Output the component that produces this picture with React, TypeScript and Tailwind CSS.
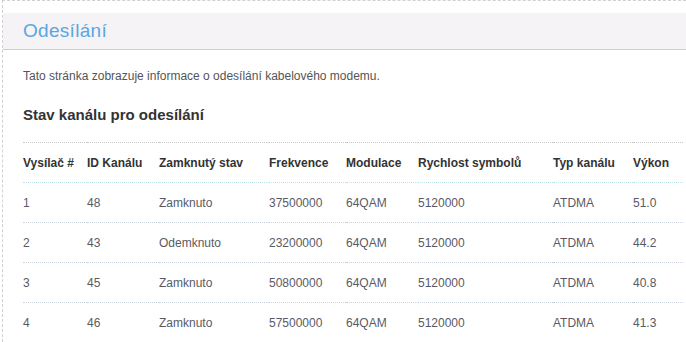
const columns = [
  { label: "Vysílač #", width: "w-[64px]" },
  { label: "ID Kanálu", width: "w-[72px]" },
  { label: "Zamknutý stav", width: "w-[110px]" },
  { label: "Frekvence", width: "w-[77px]" },
  { label: "Modulace", width: "w-[72px]" },
  { label: "Rychlost symbolů", width: "w-[135px]" },
  { label: "Typ kanálu", width: "w-[80px]" },
  { label: "Výkon", width: "w-[50px]" },
];

const rows = [
  ["1", "48", "Zamknuto", "37500000", "64QAM", "5120000", "ATDMA", "51.0"],
  ["2", "43", "Odemknuto", "23200000", "64QAM", "5120000", "ATDMA", "44.2"],
  ["3", "45", "Zamknuto", "50800000", "64QAM", "5120000", "ATDMA", "40.8"],
  ["4", "46", "Zamknuto", "57500000", "64QAM", "5120000", "ATDMA", "41.3"],
];

export default function App() {
  return (
    <div className="w-[686px] h-[342px] overflow-hidden bg-white font-['Liberation_Sans',Arial,sans-serif]">
      <div className="ml-[2px] h-full border-l border-t border-dashed border-[#d0d0d0]">
        <div className="mt-[12px] h-[37px] flex items-center pl-[20px] bg-[#f5f3f6] border-b border-[#cfcfcf]">
          <h1 className="text-[19px] text-[#5aa6e2] tracking-[0.3px]">Odesílání</h1>
        </div>
        <div className="pl-[20px]">
          <p className="mt-[19px] text-[12px] leading-[14px] text-[#555]">
            Tato stránka zobrazuje informace o odesílání kabelového modemu.
          </p>
          <h2 className="mt-[23px] text-[15px] leading-[18px] font-bold text-[#333]">Stav kanálu pro odesílání</h2>
          <table className="mt-[18px] table-fixed border-collapse text-[12px]">
            <thead>
              <tr className="h-[40px] border-t border-b border-dotted border-t-[#c8c8c8] border-b-[#bfe3ea]">
                {columns.map((c) => (
                  <th key={c.label} className={`${c.width} p-0 text-left font-bold text-[#333]`}>
                    {c.label}
                  </th>
                ))}
              </tr>
            </thead>
            <tbody>
              {rows.map((r, i) => (
                <tr key={i} className="h-[40px] border-b border-dotted border-[#cdd3dc]">
                  {r.map((v, j) => (
                    <td key={j} className="p-0 text-[#5a5a64]">
                      {v}
                    </td>
                  ))}
                </tr>
              ))}
            </tbody>
          </table>
        </div>
      </div>
    </div>
  );
}
